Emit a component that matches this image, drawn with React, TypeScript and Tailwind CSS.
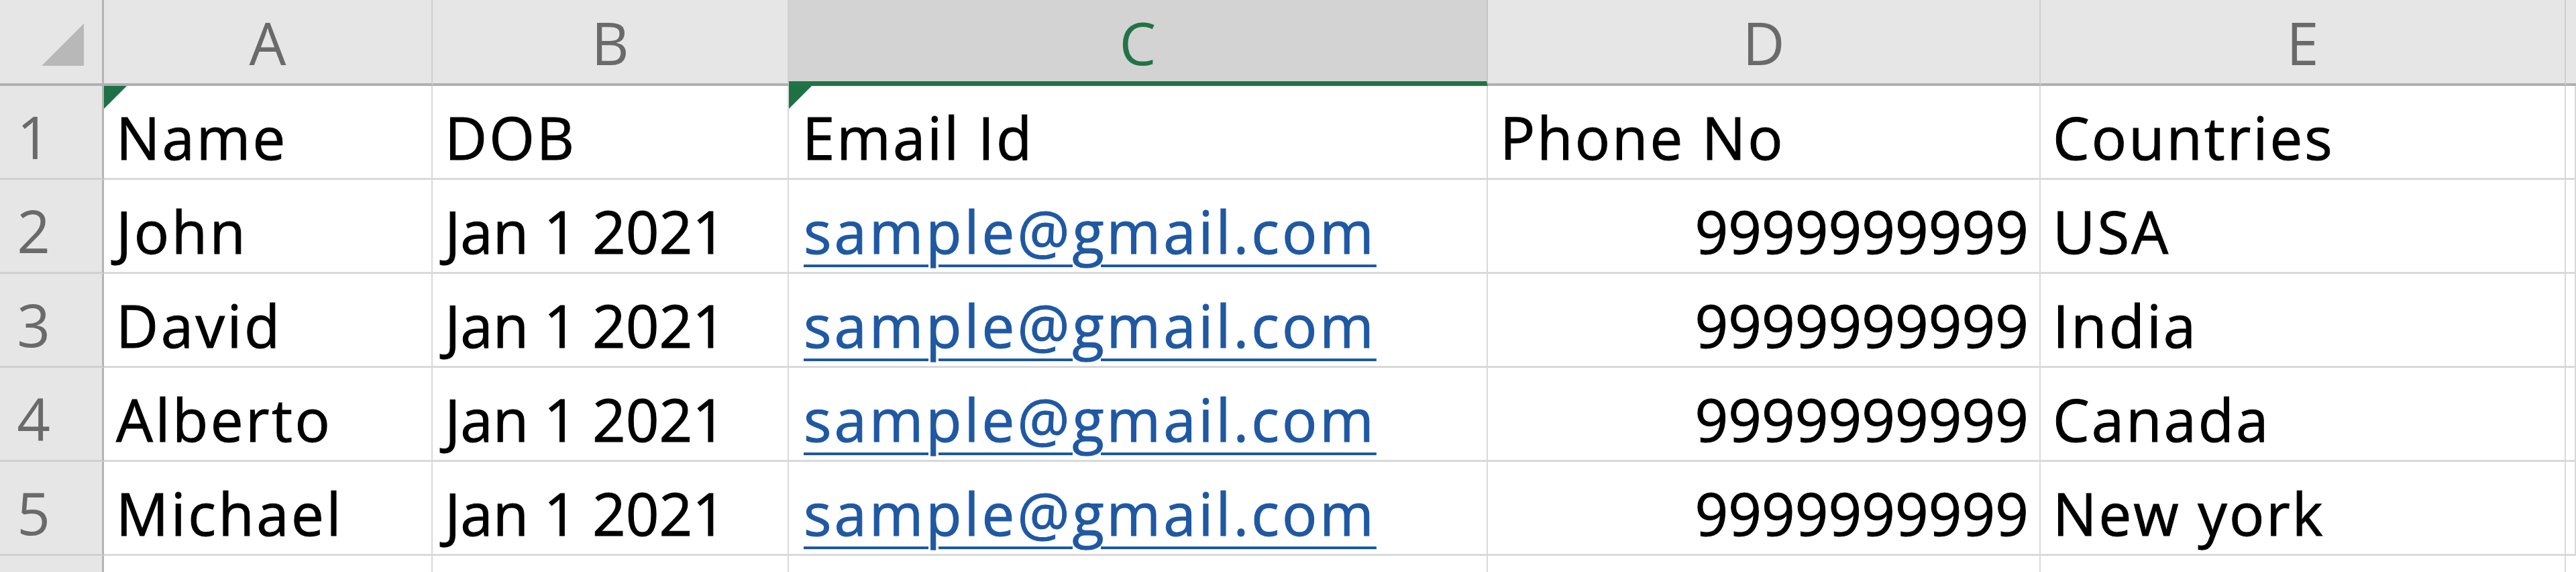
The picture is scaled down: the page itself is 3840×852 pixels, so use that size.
import React from 'react';

type Row = { n: number; name: string; dob: string; email: string; phone: string; country: string };

const rows: Row[] = [
  { n: 2, name: 'John', dob: 'Jan 1 2021', email: 'sample@gmail.com', phone: '9999999999', country: 'USA' },
  { n: 3, name: 'David', dob: 'Jan 1 2021', email: 'sample@gmail.com', phone: '9999999999', country: 'India' },
  { n: 4, name: 'Alberto', dob: 'Jan 1 2021', email: 'sample@gmail.com', phone: '9999999999', country: 'Canada' },
  { n: 5, name: 'Michael', dob: 'Jan 1 2021', email: 'sample@gmail.com', phone: '9999999999', country: 'New york' },
];

const grid = 'grid grid-cols-[155px_490px_531px_1042px_824px_783px_1fr]';
const cell = 'h-[140px] flex items-end pb-[17px] border-r-2 border-b-[3px] border-[#d9d9d9] bg-white leading-none whitespace-nowrap overflow-hidden [-webkit-text-stroke:1px_currentColor]';
const rowHead = 'h-[140px] flex items-end pb-[18px] pr-[52px] justify-center border-r-[3px] border-r-[#b4b4b4] border-b-[3px] border-b-[#d0d0d0] bg-[#e6e6e6] text-[#6a6a6a] leading-none';
const colHead = 'h-[128px] flex items-end justify-center pb-[17px] border-r-2 border-r-[#cfcfcf] border-b-4 border-b-[#b0b0b0] bg-[#e6e6e6] text-[#6a6a6a] leading-none';

// green error-indicator corner of a cell
const Flag = () => (
  <span className="absolute left-0 top-0 w-0 h-0 border-t-[34px] border-t-[#1e7145] border-r-[34px] border-r-transparent" />
);

const App: React.FC = () => {
  return (
    <div className="w-[3840px] h-[852px] overflow-hidden bg-white text-[87px] text-black" style={{ fontFamily: '"Open Sans", "Noto Sans", sans-serif' }}>
      {/* column headers */}
      <div className={grid}>
        <div className="h-[128px] relative border-r-[3px] border-r-[#b4b4b4] border-b-4 border-b-[#b0b0b0] bg-[#e6e6e6]">
          <svg className="absolute left-[62px] top-[35px]" width="63" height="63" viewBox="0 0 63 63">
            <polygon points="63,0 63,63 0,63" fill="#b8b8b8" />
          </svg>
        </div>
        <div className={colHead}>A</div>
        <div className={colHead}>B</div>
        <div className="h-[128px] flex items-end justify-center pb-[14px] border-r-2 border-r-[#c4c4c4] border-b-[7px] border-b-[#217346] bg-[#d3d3d3] text-[#217346] leading-none">C</div>
        <div className={colHead}>D</div>
        <div className={colHead}>E</div>
        <div className="h-[128px] border-b-4 border-b-[#b0b0b0] bg-[#e6e6e6]" />
      </div>

      {/* row 1 */}
      <div className={grid}>
        <div className={rowHead}>1</div>
        <div className={`${cell} relative pl-[18px] tracking-[3px]`}>
          <Flag />
          Name
        </div>
        <div className={`${cell} pl-[18px] tracking-[3px]`}>DOB</div>
        <div className={`${cell} relative pl-[20px] tracking-[3px]`}>
          <Flag />
          Email Id
        </div>
        <div className={`${cell} pl-[18px] tracking-[3px]`}>Phone No</div>
        <div className={`${cell} pl-[18px] tracking-[3px]`}>Countries</div>
        <div className={cell} />
      </div>

      {rows.map((r) => (
        <div key={r.n} className={grid}>
          <div className={rowHead}>{r.n}</div>
          <div className={`${cell} pl-[18px] tracking-[3.5px]`}>{r.name}</div>
          <div className={`${cell} pl-[18px]`}>{r.dob}</div>
          <div className={`${cell} pl-[22px] tracking-[4px]`}>
            <span className="text-[#1f58a3] underline decoration-[4px] underline-offset-[16px]">{r.email}</span>
          </div>
          <div className={`${cell} justify-end pr-[16px]`}>{r.phone}</div>
          <div className={`${cell} pl-[18px] tracking-[3px]`}>{r.country}</div>
          <div className={cell} />
        </div>
      ))}

      {/* partial row 6 */}
      <div className={grid}>
        <div className="h-[140px] border-r-[3px] border-r-[#b4b4b4] bg-[#e6e6e6]" />
        <div className="h-[140px] border-r-2 border-[#d9d9d9]" />
        <div className="h-[140px] border-r-2 border-[#d9d9d9]" />
        <div className="h-[140px] border-r-2 border-[#d9d9d9]" />
        <div className="h-[140px] border-r-2 border-[#d9d9d9]" />
        <div className="h-[140px] border-r-2 border-[#d9d9d9]" />
        <div className="h-[140px]" />
      </div>
    </div>
  );
};

export default App;
